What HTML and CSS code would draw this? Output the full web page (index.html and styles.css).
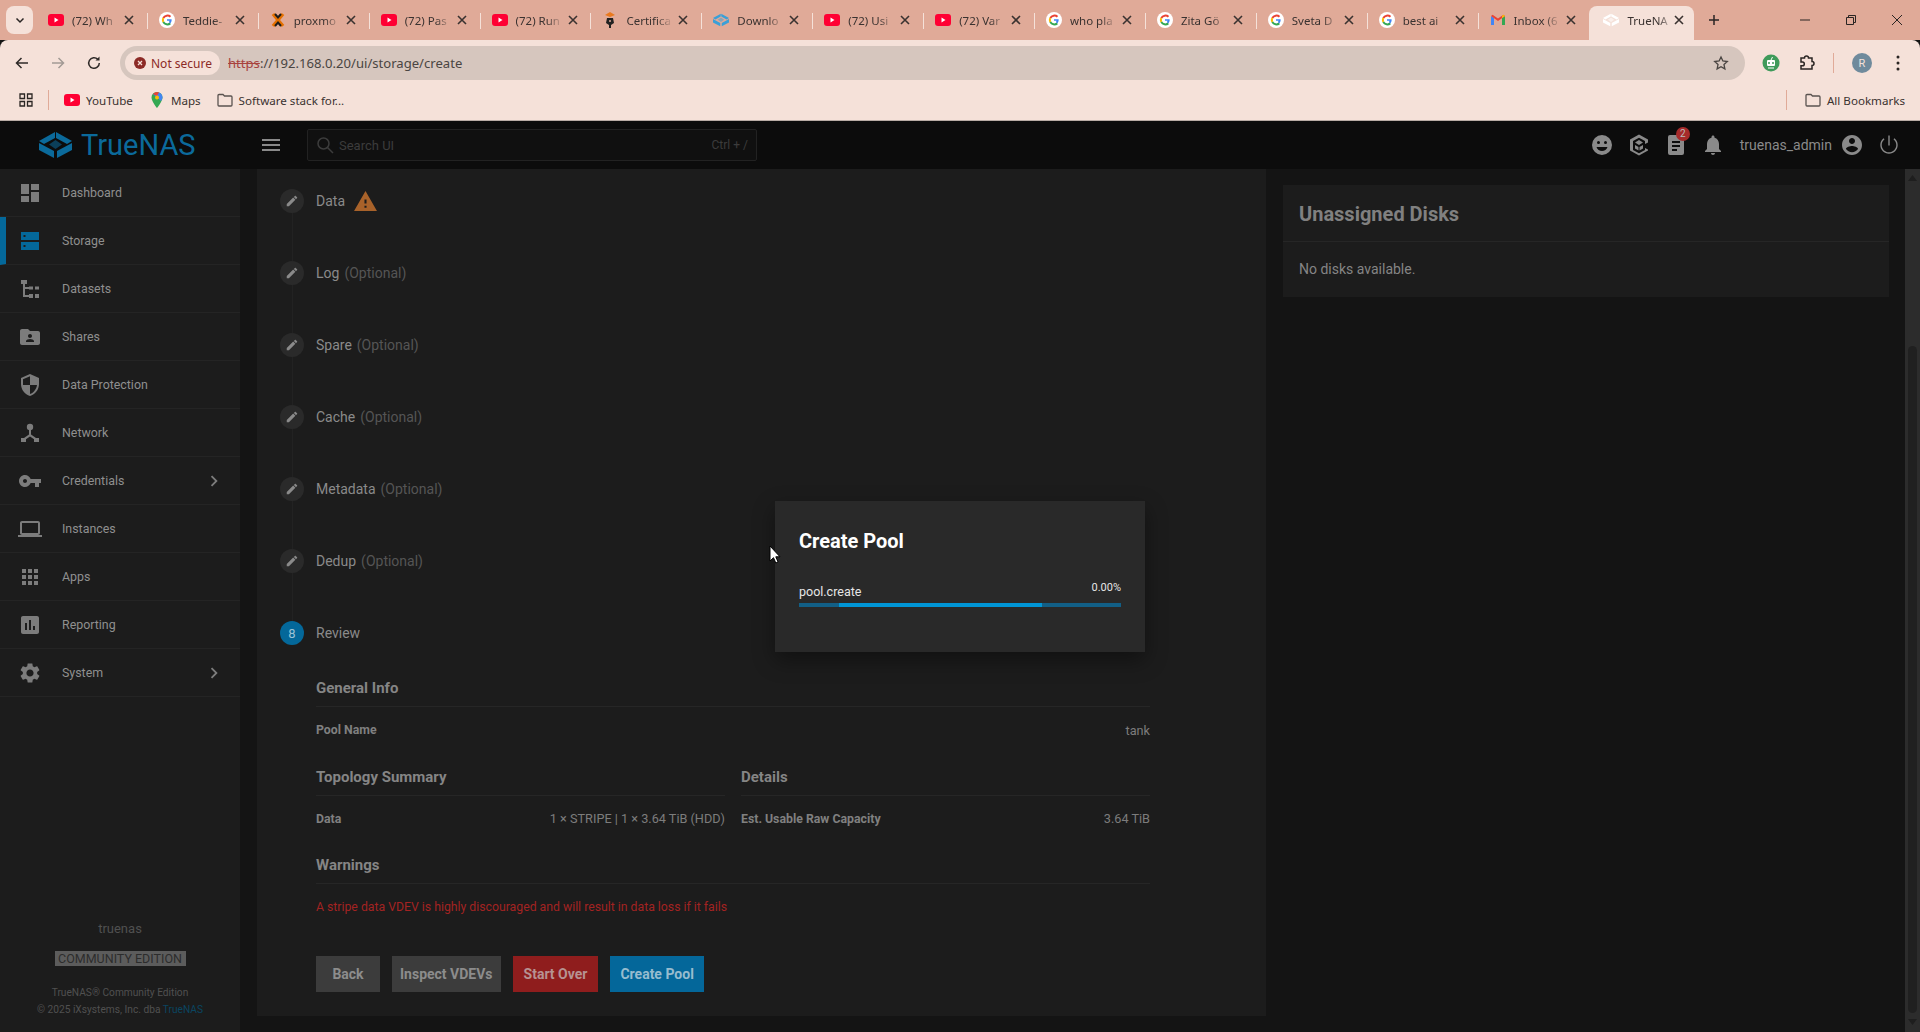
FILE: index.html
```html
<!DOCTYPE html>
<html lang="en">
<head>
  <meta charset="UTF-8">
  <title>TrueNAS - Storage</title>
  <link rel="stylesheet" href="styles.css">
</head>
<body>
  <svg class="defs" width="0" height="0">
    <symbol id="i-yt" viewBox="0 0 16 16"><rect y="2" width="16" height="12" rx="3" fill="#ff0033"/><path d="M6.5 5.5v5l4-2.5z" fill="#fff"/></symbol>
    <symbol id="i-g" viewBox="0 0 16 16"><circle cx="8" cy="8" r="8" fill="#fff"/><path d="M11.5 4.8A4.7 4.7 0 0 0 4.3 6" fill="none" stroke="#ea4335" stroke-width="2"/><path d="M4.3 6a4.7 4.7 0 0 0 0 4" fill="none" stroke="#fbbc05" stroke-width="2"/><path d="M4.3 10a4.7 4.7 0 0 0 7 1.4" fill="none" stroke="#34a853" stroke-width="2"/><path d="M8 7.2h4.6c.2 1.7-.3 3.2-1.3 4.2L9.8 10c.5-.4.7-.8.8-1.2H8z" fill="#4285f4"/></symbol>
    <symbol id="i-x" viewBox="0 0 16 16"><path d="M3 2l10 12M13 2L3 14" stroke="#e57000" stroke-width="3.4" fill="none"/><path d="M5 2l3 3.4L11 2M5 14l3-3.4 3 3.4" stroke="#1c1c1c" stroke-width="2" fill="none"/></symbol>
    <symbol id="i-cert" viewBox="0 0 16 16"><path d="M8 0l5 3-5 2-5-2z" fill="#e8791f"/><path d="M5 6h6l1 5-3 2v3H7v-3l-3-2z" fill="#222"/><circle cx="8" cy="9" r="1" fill="#e0aa98"/></symbol>
    <symbol id="i-tn" viewBox="0 0 33 26"><path d="M16 0L0 9l5 3 11-6z" fill="currentColor"/><path d="M17 0l16 9-5 3-11-6z" fill="currentColor"/><path d="M0 11v7l15 8v-7z" fill="currentColor"/><path d="M33 11v7l-15 8v-7z" fill="currentColor"/><path d="M16.5 8l6.5 4.5-6.5 4.5-6.5-4.5z" fill="currentColor" opacity=".55"/></symbol>
    <symbol id="i-gm" viewBox="0 0 16 16"><path d="M1 13V4l3 2v7z" fill="#4285f4"/><path d="M15 13V4l-3 2v7z" fill="#34a853"/><path d="M1 4l7 5 7-5-1.6-1.2L8 6.6 2.6 2.8z" fill="#ea4335"/><path d="M12 6l3-2-1.6-1.2-1.4 1z" fill="#fbbc05"/></symbol>
    <symbol id="i-close" viewBox="0 0 10 10"><path d="M1 1l8 8M9 1L1 9" stroke="#3a3230" stroke-width="1.6" fill="none"/></symbol>
    <symbol id="i-folder" viewBox="0 0 16 14"><path d="M1 2.5A1 1 0 0 1 2 1.500h4l1.500 1.500H14a1 1 0 0 1 1 1V12a1 1 0 0 1-1 1H2a1 1 0 0 1-1-1z" fill="none" stroke="#5a5350" stroke-width="1.300"/></symbol>
    <symbol id="i-pencil" viewBox="0 0 24 24"><path d="M3 17.250V21h3.750L17.810 9.940l-3.750-3.750L3 17.250zM20.710 7.040c.39-.39.39-1.020 0-1.410l-2.340-2.340c-.39-.39-1.020-.39-1.410 0l-1.830 1.830 3.750 3.750 1.830-1.830z" fill="currentColor"/></symbol>
    <symbol id="i-chev" viewBox="0 0 24 24"><path d="M8.590 16.590L13.170 12 8.590 7.410 10 6l6 6-6 6z" fill="currentColor"/></symbol>
  </svg>

  <div class="tabstrip">
    <button class="tab-menu"><svg width="12" height="12" viewBox="0 0 12 12"><path d="M2.500 4.500L6 8l3.500-3.500" stroke="#2a2523" stroke-width="1.500" fill="none"/></svg></button>
    <div class="tab"><svg class="fav"><use href="#i-yt"/></svg><span class="tab-title">(72) Wh</span><svg class="tab-x"><use href="#i-close"/></svg></div>
    <div class="tab"><svg class="fav"><use href="#i-g"/></svg><span class="tab-title">Teddie-</span><svg class="tab-x"><use href="#i-close"/></svg></div>
    <div class="tab"><svg class="fav"><use href="#i-x"/></svg><span class="tab-title">proxmo</span><svg class="tab-x"><use href="#i-close"/></svg></div>
    <div class="tab"><svg class="fav"><use href="#i-yt"/></svg><span class="tab-title">(72) Pas</span><svg class="tab-x"><use href="#i-close"/></svg></div>
    <div class="tab"><svg class="fav"><use href="#i-yt"/></svg><span class="tab-title">(72) Run</span><svg class="tab-x"><use href="#i-close"/></svg></div>
    <div class="tab"><svg class="fav"><use href="#i-cert"/></svg><span class="tab-title">Certifica</span><svg class="tab-x"><use href="#i-close"/></svg></div>
    <div class="tab"><svg class="fav fav-blue"><use href="#i-tn"/></svg><span class="tab-title">Downlo</span><svg class="tab-x"><use href="#i-close"/></svg></div>
    <div class="tab"><svg class="fav"><use href="#i-yt"/></svg><span class="tab-title">(72) Usi</span><svg class="tab-x"><use href="#i-close"/></svg></div>
    <div class="tab"><svg class="fav"><use href="#i-yt"/></svg><span class="tab-title">(72) Var</span><svg class="tab-x"><use href="#i-close"/></svg></div>
    <div class="tab"><svg class="fav"><use href="#i-g"/></svg><span class="tab-title">who pla</span><svg class="tab-x"><use href="#i-close"/></svg></div>
    <div class="tab"><svg class="fav"><use href="#i-g"/></svg><span class="tab-title">Zita Gö</span><svg class="tab-x"><use href="#i-close"/></svg></div>
    <div class="tab"><svg class="fav"><use href="#i-g"/></svg><span class="tab-title">Sveta D</span><svg class="tab-x"><use href="#i-close"/></svg></div>
    <div class="tab"><svg class="fav"><use href="#i-g"/></svg><span class="tab-title">best ai</span><svg class="tab-x"><use href="#i-close"/></svg></div>
    <div class="tab tab-last"><svg class="fav"><use href="#i-gm"/></svg><span class="tab-title">Inbox (6</span><svg class="tab-x"><use href="#i-close"/></svg></div>
    <div class="tab tab-active"><svg class="fav fav-white"><use href="#i-tn"/></svg><span class="tab-title">TrueNA</span><svg class="tab-x"><use href="#i-close"/></svg></div>
    <svg class="tab-new" width="12" height="12" viewBox="0 0 12 12"><path d="M6 1v10M1 6h10" stroke="#2a2523" stroke-width="1.500"/></svg>
    <div class="win-controls">
      <svg width="12" height="12" viewBox="0 0 12 12"><path d="M1 6h10" stroke="#2a2523"/></svg>
      <svg width="12" height="12" viewBox="0 0 12 12"><path d="M3.500 3.500V1.500h7v7h-2M1.500 3.500h7v7h-7z" fill="none" stroke="#2a2523"/></svg>
      <svg width="12" height="12" viewBox="0 0 12 12"><path d="M1 1l10 10M11 1L1 11" stroke="#2a2523"/></svg>
    </div>
  </div>

  <div class="toolbar">
    <span class="nav-btn"><svg width="16" height="16" viewBox="0 0 16 16"><path d="M14 8H3M7.500 3L2.500 8l5 5" fill="none" stroke="#2f2a28" stroke-width="1.500"/></svg></span>
    <span class="nav-btn"><svg width="16" height="16" viewBox="0 0 16 16"><path d="M2 8h11M8.500 3l5 5-5 5" fill="none" stroke="#a39a95" stroke-width="1.500"/></svg></span>
    <span class="nav-btn"><svg width="16" height="16" viewBox="0 0 16 16"><path d="M13.300 8a5.300 5.300 0 1 1-1.500-3.700" fill="none" stroke="#2f2a28" stroke-width="1.500"/><path d="M13.500 1.500v4h-4z" fill="#2f2a28"/></svg></span>
    <div class="omnibox">
      <span class="chip">
        <svg width="12" height="12" viewBox="0 0 12 12"><circle cx="6" cy="6" r="6" fill="#8c2a26"/><path d="M4 4l4 4M8 4L4 8" stroke="#f5e1d9" stroke-width="1.300"/></svg>
        Not secure
      </span>
      <span class="url"><span class="url-scheme">https</span>://192.168.0.20/ui/storage/create</span>
      <svg class="star" width="16" height="16" viewBox="0 0 24 24"><path d="M12 3l2.800 6 6.600.8-4.900 4.500 1.300 6.500-5.800-3.200-5.800 3.200 1.300-6.500L2.600 9.800 9.200 9z" fill="none" stroke="#4a4542" stroke-width="2"/></svg>
    </div>
    <div class="toolbar-right">
      <span class="nav-btn"><svg width="18" height="18" viewBox="0 0 18 18"><circle cx="9" cy="9" r="8.500" fill="#3f9a5a"/><rect x="5" y="6" width="8" height="6" rx="1" fill="#fff"/><circle cx="7" cy="9" r="1" fill="#3f9a5a"/><circle cx="11" cy="9" r="1" fill="#3f9a5a"/><path d="M9 6l1.500-3M6 14h6" stroke="#fff"/></svg></span>
      <span class="nav-btn"><svg width="18" height="18" viewBox="0 0 18 18"><path d="M3 4h3.500a2 2 0 0 1 4 0H14v3.500a2 2 0 0 1 0 4V15H3v-3.300h1.500a1.800 1.800 0 0 0 0-3.600H3z" fill="none" stroke="#2a2523" stroke-width="1.500"/></svg></span>
      <span class="toolbar-sep"></span>
      <span class="nav-btn"><span class="avatar">R</span></span>
      <span class="nav-btn"><svg width="4" height="16" viewBox="0 0 4 16"><circle cx="2" cy="2" r="1.500" fill="#2a2523"/><circle cx="2" cy="8" r="1.500" fill="#2a2523"/><circle cx="2" cy="14" r="1.500" fill="#2a2523"/></svg></span>
    </div>
  </div>

  <div class="bookmarks">
    <svg class="bm-apps" width="14" height="14" viewBox="0 0 14 14"><path d="M1 1h4.500v4.500H1zM8.500 1H13v4.500H8.500zM1 8.500h4.500V13H1zM8.500 8.500H13V13H8.500z" fill="none" stroke="#2a2523" stroke-width="1.300"/></svg>
    <span class="bm-sep"></span>
    <span class="bm"><svg class="fav"><use href="#i-yt"/></svg>YouTube</span>
    <span class="bm"><svg class="fav" viewBox="0 0 16 16"><path d="M8 0a5.500 5.500 0 0 0-5.500 5.500C2.500 9.500 8 16 8 16s5.500-6.500 5.500-10.500A5.500 5.500 0 0 0 8 0z" fill="#34a853"/><path d="M4 2l8 7c.8-1.200 1.500-2.400 1.500-3.500A5.500 5.500 0 0 0 10 .4z" fill="#4285f4"/><path d="M4 2a5.500 5.500 0 0 1 6-1.600L8 4z" fill="#ea4335"/><circle cx="8" cy="5.500" r="2" fill="#fbbc05"/></svg>Maps</span>
    <span class="bm"><svg class="fav" viewBox="0 0 16 14"><use href="#i-folder"/></svg>Software stack for...</span>
    <span class="bm-sep bm-sep-right"></span>
    <span class="bm bm-all"><svg class="fav" viewBox="0 0 16 14"><use href="#i-folder"/></svg>All Bookmarks</span>
  </div>

  <header class="topbar">
    <div class="brand">
      <svg class="brand-mark" width="33" height="26"><use href="#i-tn"/></svg>
      <span class="brand-name">TrueNAS</span>
    </div>
    <svg class="hamburger" width="24" height="24" viewBox="0 0 24 24"><path d="M3 18h18v-2H3v2zm0-5h18v-2H3v2zm0-7v2h18V6H3z" fill="#8a8a8a"/></svg>
    <div class="search">
      <svg width="18" height="18" viewBox="0 0 18 18"><circle cx="7.500" cy="7.500" r="5.500" fill="none" stroke="#3c3c3c" stroke-width="1.500"/><path d="M11.500 11.500L17 17" stroke="#3c3c3c" stroke-width="1.500"/></svg>
      <span class="search-text">Search UI</span>
      <span class="search-key">Ctrl + /</span>
    </div>
    <div class="top-actions">
      <svg width="24" height="24" viewBox="0 0 24 24"><path fill-rule="evenodd" d="M12 2a10 10 0 1 0 0 20 10 10 0 0 0 0-20zM8.500 8a1.500 1.500 0 1 1 0 3 1.500 1.500 0 0 1 0-3zm7 0a1.500 1.500 0 1 1 0 3 1.500 1.500 0 0 1 0-3zM12 18c-2.600 0-4.700-1.600-5.500-4h11c-.8 2.400-2.900 4-5.500 4z" fill="#8a8a8a"/></svg>
      <svg width="24" height="24" viewBox="0 0 24 24"><path d="M12 1.500l9 5v3l-3 1.500v-3l-6-3.300-6 3.300v9l6 3.300 6-3.300V15l3 1.500v1L12 22.500 3 17.500v-11z" fill="#8a8a8a"/><path d="M12 7l4 2.500-4 2.500-4-2.500zM8 12l3.500 2v3.500L8 15.500zM16 12l-3.500 2v3.500l3.500-2z" fill="#8a8a8a"/></svg>
      <span class="task-icon">
        <svg width="24" height="24" viewBox="0 0 24 24"><path fill-rule="evenodd" d="M6 2h12a2 2 0 0 1 2 2v16a2 2 0 0 1-2 2H6a2 2 0 0 1-2-2V4a2 2 0 0 1 2-2zm2 6v2h8V8zm0 4v2h8v-2zm0 4v2h5v-2z" fill="#8a8a8a"/></svg>
        <span class="badge">2</span>
      </span>
      <svg width="24" height="24" viewBox="0 0 24 24"><path d="M12 22c1.100 0 2-.9 2-2h-4c0 1.100.89 2 2 2zm6-6v-5c0-3.070-1.640-5.640-4.500-6.320V4c0-.83-.67-1.500-1.500-1.500s-1.500.67-1.500 1.500v.68C7.630 5.360 6 7.920 6 11v5l-2 2v1h16v-1l-2-2z" fill="#8a8a8a"/></svg>
      <span class="username">truenas_admin</span>
      <svg width="24" height="24" viewBox="0 0 24 24"><path d="M12 2C6.480 2 2 6.480 2 12s4.480 10 10 10 10-4.480 10-10S17.520 2 12 2zm0 3c1.660 0 3 1.340 3 3s-1.340 3-3 3-3-1.340-3-3 1.340-3 3-3zm0 14.200c-2.500 0-4.710-1.280-6-3.220.03-1.990 4-3.080 6-3.080 1.990 0 5.970 1.090 6 3.080-1.290 1.940-3.500 3.220-6 3.220z" fill="#8a8a8a"/></svg>
      <svg width="24" height="24" viewBox="0 0 24 24"><path d="M12.700 2.500h-1.400v10h1.400zM17.500 5.300l-1 1C18.200 7.700 19.300 9.700 19.300 12c0 4-3.300 7.300-7.300 7.300S4.700 16 4.700 12c0-2.300 1.100-4.300 2.800-5.700l-1-1C4.400 7 3.300 9.400 3.300 12c0 4.800 3.900 8.700 8.700 8.700s8.700-3.900 8.700-8.700c0-2.600-1.100-5-3.200-6.700z" fill="#8a8a8a"/></svg>
    </div>
  </header>

  <div class="app">
    <nav class="sidebar">
      <a class="nav-item"><svg class="nav-icon" viewBox="0 0 24 24"><path d="M3 13h8V3H3v10zm0 8h8v-6H3v6zm10 0h8V11h-8v10zm0-18v6h8V3h-8z"/></svg>Dashboard</a>
      <a class="nav-item nav-active"><svg class="nav-icon" viewBox="0 0 24 24"><path fill-rule="evenodd" d="M3 3h18v8H3zm0 10h18v8H3zM5.500 6v2h2V6zm0 10v2h2v-2z"/></svg>Storage</a>
      <a class="nav-item"><svg class="nav-icon" viewBox="0 0 24 24"><path d="M3 3h6v4H3zM11 9.500h4v3h-4zM17 9.500h4v3h-4zM11 17h4v4h-4zM17 17h4v4h-4zM5 7h2v3h4v2H7v6h4v2H5z"/></svg>Datasets</a>
      <a class="nav-item"><svg class="nav-icon" viewBox="0 0 24 24"><path d="M20 6h-8l-2-2H4c-1.100 0-1.990.9-1.990 2L2 18c0 1.100.9 2 2 2h16c1.100 0 2-.9 2-2V8c0-1.100-.9-2-2-2zm-8 3c1.100 0 2 .9 2 2s-.9 2-2 2-2-.9-2-2 .9-2 2-2zm4 8H8v-1c0-1.330 2.670-2 4-2s4 .67 4 2v1z"/></svg>Shares</a>
      <a class="nav-item"><svg class="nav-icon" viewBox="0 0 24 24"><path d="M12 1L3 5v6c0 5.550 3.840 10.740 9 12 5.160-1.260 9-6.450 9-12V5l-9-4zm0 10.990h7c-.53 4.120-3.280 7.790-7 8.940V12H5V6.300l7-3.110v8.800z"/></svg>Data Protection</a>
      <a class="nav-item"><svg class="nav-icon" viewBox="0 0 24 24"><circle cx="12" cy="6" r="3.200"/><path d="M11 8h2v5.500l5 3.500-1.200 1.700-4.800-3.300-4.800 3.300L6 17l5-3.500z"/><path d="M3 17h5v4H3zM16 17h5v4h-5z"/></svg>Network</a>
      <a class="nav-item"><svg class="nav-icon" viewBox="0 0 24 24"><path d="M12.650 10C11.830 7.670 9.610 6 7 6c-3.310 0-6 2.690-6 6s2.690 6 6 6c2.610 0 4.830-1.670 5.650-4H17v4h4v-4h2v-4H12.650zM7 14c-1.100 0-2-.9-2-2s.9-2 2-2 2 .9 2 2-.9 2-2 2z"/></svg>Credentials<svg class="nav-chev"><use href="#i-chev"/></svg></a>
      <a class="nav-item"><svg class="nav-icon" viewBox="0 0 24 24"><path d="M20 18c1.100 0 1.990-.9 1.990-2L22 6c0-1.100-.9-2-2-2H4c-1.100 0-2 .9-2 2v10c0 1.100.9 2 2 2H0v2h24v-2h-4zM4 6h16v10H4V6z"/></svg>Instances</a>
      <a class="nav-item"><svg class="nav-icon" viewBox="0 0 24 24"><path d="M4 8h4V4H4v4zm6 12h4v-4h-4v4zm-6 0h4v-4H4v4zm0-6h4v-4H4v4zm6 0h4v-4h-4v4zm6-10v4h4V4h-4zm-6 4h4V4h-4v4zm6 6h4v-4h-4v4zm0 6h4v-4h-4v4z"/></svg>Apps</a>
      <a class="nav-item"><svg class="nav-icon" viewBox="0 0 24 24"><path d="M19 3H5c-1.100 0-2 .9-2 2v14c0 1.100.9 2 2 2h14c1.100 0 2-.9 2-2V5c0-1.100-.9-2-2-2zM9 17H7v-7h2v7zm4 0h-2V7h2v10zm4 0h-2v-4h2v4z"/></svg>Reporting</a>
      <a class="nav-item"><svg class="nav-icon" viewBox="0 0 24 24"><path d="M19.140 12.940c.04-.3.06-.61.06-.94 0-.32-.02-.64-.07-.94l2.030-1.580c.18-.14.23-.41.12-.61l-1.920-3.320c-.12-.22-.37-.29-.59-.22l-2.390.96c-.5-.38-1.030-.7-1.620-.94l-.36-2.540c-.04-.24-.24-.41-.48-.41h-3.840c-.24 0-.43.17-.47.41l-.36 2.540c-.59.24-1.130.57-1.620.94l-2.390-.96c-.22-.08-.47 0-.59.22L2.740 8.870c-.12.21-.08.47.12.61l2.030 1.580c-.05.3-.09.63-.09.94s.02.64.07.94l-2.030 1.580c-.18.14-.23.41-.12.61l1.920 3.320c.12.22.37.29.59.22l2.390-.96c.5.38 1.030.7 1.620.94l.36 2.540c.05.24.24.41.48.41h3.840c.24 0 .44-.17.47-.41l.36-2.540c.59-.24 1.130-.56 1.620-.94l2.390.96c.22.08.47 0 .59-.22l1.920-3.320c.12-.22.07-.47-.12-.61l-2.010-1.580zM12 15.600c-1.980 0-3.600-1.620-3.600-3.600s1.620-3.600 3.600-3.600 3.600 1.620 3.600 3.600-1.620 3.600-3.600 3.600z"/></svg>System<svg class="nav-chev"><use href="#i-chev"/></svg></a>
      <div class="side-footer">
        <div class="host">truenas</div>
        <div class="edition">COMMUNITY EDITION</div>
        <div class="copy">TrueNAS® Community Edition</div>
        <div class="copy">© 2025 iXsystems, Inc. dba <span class="copy-link">TrueNAS</span></div>
      </div>
    </nav>

    <main class="content">
      <section class="wizard">
        <div class="step"><span class="step-dot"><svg width="14" height="14"><use href="#i-pencil"/></svg></span><span class="step-label">Data</span><svg class="step-warn" width="25" height="25" viewBox="0 0 24 24"><path d="M1 21h22L12 2 1 21zm12-3h-2v-2h2v2zm0-4h-2v-4h2v4z" fill="#a8622a"/></svg></div>
        <div class="step-line"></div>
        <div class="step"><span class="step-dot"><svg width="14" height="14"><use href="#i-pencil"/></svg></span><span class="step-label">Log</span><span class="step-opt">(Optional)</span></div>
        <div class="step-line"></div>
        <div class="step"><span class="step-dot"><svg width="14" height="14"><use href="#i-pencil"/></svg></span><span class="step-label">Spare</span><span class="step-opt">(Optional)</span></div>
        <div class="step-line"></div>
        <div class="step"><span class="step-dot"><svg width="14" height="14"><use href="#i-pencil"/></svg></span><span class="step-label">Cache</span><span class="step-opt">(Optional)</span></div>
        <div class="step-line"></div>
        <div class="step"><span class="step-dot"><svg width="14" height="14"><use href="#i-pencil"/></svg></span><span class="step-label">Metadata</span><span class="step-opt">(Optional)</span></div>
        <div class="step-line"></div>
        <div class="step"><span class="step-dot"><svg width="14" height="14"><use href="#i-pencil"/></svg></span><span class="step-label">Dedup</span><span class="step-opt">(Optional)</span></div>
        <div class="step-line"></div>
        <div class="step"><span class="step-dot step-dot-on">8</span><span class="step-label">Review</span></div>

        <div class="review">
          <div class="review-block">
            <h3 class="review-head">General Info</h3>
            <div class="review-row"><span class="review-key">Pool Name</span><span>tank</span></div>
          </div>
          <div class="review-cols">
            <div class="review-block">
              <h3 class="review-head">Topology Summary</h3>
              <div class="review-row"><span class="review-key">Data</span><span>1 × STRIPE | 1 × 3.64 TiB (HDD)</span></div>
            </div>
            <div class="review-block">
              <h3 class="review-head">Details</h3>
              <div class="review-row"><span class="review-key">Est. Usable Raw Capacity</span><span>3.64 TiB</span></div>
            </div>
          </div>
          <div class="review-block">
            <h3 class="review-head">Warnings</h3>
            <div class="review-warn">A stripe data VDEV is highly discouraged and will result in data loss if it fails</div>
          </div>
          <div class="actions">
            <button class="btn btn-back">Back</button>
            <button class="btn">Inspect VDEVs</button>
            <button class="btn btn-red">Start Over</button>
            <button class="btn btn-blue">Create Pool</button>
          </div>
        </div>
      </section>

      <aside class="disks">
        <h2 class="disks-head">Unassigned Disks</h2>
        <div class="disks-body">No disks available.</div>
      </aside>
    </main>

    <div class="scrollbar"><svg width="9" height="6" viewBox="0 0 9 6"><path d="M4.500 0L9 6H0z" fill="#1e1e1e"/></svg><div class="scroll-thumb"></div><svg width="9" height="6" viewBox="0 0 9 6"><path d="M4.500 6L9 0H0z" fill="#1e1e1e"/></svg></div>
  </div>

  <div class="dialog">
    <h2 class="dialog-title">Create Pool</h2>
    <div class="dialog-row"><span class="dialog-job">pool.create</span><span class="dialog-pct">0.00%</span></div>
    <div class="progress"><div class="progress-fill"></div></div>
  </div>

  <svg class="cursor" width="12" height="19" viewBox="0 0 12 19"><path d="M1 1v15l3.500-3.300 2.300 5.300 2.300-1-2.300-5.200H11z" fill="#fff" stroke="#000"/></svg>
</body>
</html>
```

FILE: styles.css
```css
/* Page */
* {
  box-sizing: border-box;
}
html, body {
  margin: 0;
  height: 1032px;
  overflow: hidden;
}
body {
  position: relative;
  background: #141414;
  font-family: Roboto, "Liberation Sans", sans-serif;
  color: #8a8a8a;
}
.defs {
  position: absolute;
}
h2, h3 {
  margin: 0;
}

/* Browser tabs */
.tabstrip {
  display: flex;
  align-items: center;
  height: 40px;
  padding-left: 6px;
  background: #e0aa98;
  font-family: "Noto Sans", sans-serif;
  font-size: 11.5px;
  color: #3a3230;
}
.tab-menu {
  display: flex;
  align-items: center;
  justify-content: center;
  width: 27px;
  height: 28px;
  margin-right: 4px;
  padding: 0;
  border: none;
  border-radius: 8px;
  background: #f5e1d9;
}
.tab {
  display: flex;
  align-items: center;
  flex: none;
  position: relative;
  width: 110.9px;
  height: 40px;
  padding-left: 11px;
}
.tab::after {
  content: "";
  position: absolute;
  right: 0;
  top: 13px;
  width: 1px;
  height: 16px;
  background: #f5e1d9;
}
.tab-last::after, .tab-active::after {
  display: none;
}
.tab-active {
  width: 105px;
  height: 34px;
  margin-top: 6px;
  padding-bottom: 6px;
  padding-left: 14px;
  border-radius: 8px 8px 0 0;
  background: #f5e1d9;
}
.fav {
  flex: none;
  width: 16px;
  height: 16px;
}
.fav-blue {
  color: #3aa0d8;
}
.fav-white {
  color: #fff;
}
.tab-title {
  flex: none;
  width: 47px;
  margin-left: 8px;
  overflow: hidden;
  white-space: nowrap;
  -webkit-mask-image: linear-gradient(to right, #000 65%, transparent);
  mask-image: linear-gradient(to right, #000 65%, transparent);
}
.tab-x {
  flex: none;
  width: 10px;
  height: 10px;
  margin-left: 5px;
}
.tab-active .tab-x {
  margin-left: 0;
}
.tab-new {
  margin-left: 14px;
}
.win-controls {
  display: flex;
  gap: 34px;
  margin-left: auto;
  padding-right: 17px;
}

/* Address bar */
.toolbar {
  display: flex;
  align-items: center;
  height: 45px;
  padding: 6px 4px 5px;
  background: #f5e1d9;
  border-radius: 8px 8px 0 0;
}
.nav-btn {
  display: flex;
  align-items: center;
  justify-content: center;
  flex: none;
  width: 36px;
  height: 34px;
}
.omnibox {
  display: flex;
  align-items: center;
  flex: 1;
  height: 34px;
  margin-left: 8px;
  padding: 0 16px 0 5px;
  border-radius: 17px;
  background: #d6c6be;
}
.chip {
  display: flex;
  align-items: center;
  gap: 5px;
  width: 95px;
  height: 24px;
  padding-left: 9px;
  border-radius: 12px;
  background: #f5e1d9;
  font-family: "Noto Sans", sans-serif;
  font-size: 12px;
  color: #8c2a26;
}
.url {
  margin-left: 8px;
  font-family: "Noto Sans", sans-serif;
  font-size: 13.1px;
  color: #4a4542;
}
.url-scheme {
  color: #a8433e;
  text-decoration: line-through;
}
.star {
  margin-left: auto;
}
.toolbar-right {
  display: flex;
  align-items: center;
  margin-left: 8px;
}
.toolbar-sep {
  width: 1px;
  height: 20px;
  margin: 0 10px 0 8px;
  background: #e0aa98;
}
.avatar {
  display: flex;
  align-items: center;
  justify-content: center;
  width: 20px;
  height: 20px;
  border-radius: 50%;
  background: #6f8a9c;
  color: #f5e1d9;
  font-size: 11px;
}

/* Bookmarks bar */
.bookmarks {
  display: flex;
  align-items: center;
  height: 36px;
  padding: 0 0 5px 19px;
  background: #f5e1d9;
  border-bottom: 1px solid #b9aca5;
  font-family: "Noto Sans", sans-serif;
  font-size: 11.6px;
  color: #3a3230;
}
.bm-sep {
  width: 1px;
  height: 20px;
  margin: 0 15px;
  background: #e0aa98;
}
.bm-sep-right {
  margin: 0 18px 0 auto;
}
.bm {
  display: flex;
  align-items: center;
  gap: 6px;
  margin-right: 16px;
}
.bm-all {
  margin-right: 15px;
}

/* TrueNAS top bar */
.topbar {
  display: flex;
  align-items: center;
  height: 48px;
  padding-left: 39px;
  background: #0c0c0c;
}
.brand {
  display: flex;
  align-items: center;
  width: 220px;
}
.brand-mark {
  color: #0b6a9b;
}
.brand-name {
  margin-left: 9px;
  font-size: 29px;
  line-height: 1;
  color: #0b6a9b;
}
.search {
  display: flex;
  align-items: center;
  width: 450px;
  height: 32px;
  margin-left: 24px;
  padding: 0 8px 0 8px;
  border: 1px solid #222;
  border-radius: 2px;
  background: #101010;
  font-size: 13px;
  color: #3c3c3c;
}
.search-text {
  margin-left: 5px;
}
.search-key {
  margin-left: auto;
  font-size: 12px;
}
.top-actions {
  display: flex;
  align-items: center;
  gap: 13px;
  margin-left: auto;
  padding-right: 19px;
}
.task-icon {
  position: relative;
  height: 24px;
}
.badge {
  position: absolute;
  top: -6px;
  left: 12px;
  width: 14px;
  height: 14px;
  border-radius: 50%;
  background: #a62a2a;
  color: #bbb;
  font-size: 10px;
  line-height: 14px;
  text-align: center;
}
.username {
  margin: 0 -5px 0 2px;
  font-size: 14px;
  color: #8a8a8a;
}

/* App body */
.app {
  display: flex;
  height: 863px;
}
.sidebar {
  display: flex;
  flex-direction: column;
  flex: none;
  width: 240px;
  background: #1c1c1c;
}
.nav-item {
  display: flex;
  align-items: center;
  flex: none;
  height: 48px;
  padding-left: 18px;
  border-bottom: 1px solid #242424;
  font-size: 12.4px;
  color: #8f8f8f;
}
.nav-active {
  padding-left: 12px;
  border-left: 6px solid #04689a;
}
.nav-icon {
  width: 24px;
  height: 24px;
  margin-right: 20px;
  fill: #7c7c7c;
}
.nav-active .nav-icon {
  fill: #04689a;
}
.nav-chev {
  width: 22px;
  height: 22px;
  margin-left: auto;
  margin-right: 15px;
  color: #7c7c7c;
}
.side-footer {
  display: flex;
  flex-direction: column;
  align-items: center;
  margin-top: auto;
  padding-bottom: 14px;
  font-size: 10.2px;
  color: #505050;
}
.host {
  margin-bottom: 14px;
  font-size: 13px;
  line-height: 16px;
}
.edition {
  width: 131px;
  height: 15px;
  margin-bottom: 18px;
  background: #5c5c5c;
  color: #2c2c2c;
  font-size: 12.5px;
  line-height: 15px;
  text-align: center;
}
.copy {
  line-height: 17px;
}
.copy-link {
  color: #0a4560;
}

/* Main column */
.content {
  display: flex;
  align-items: flex-start;
  flex: 1;
  gap: 17px;
  height: 863px;
  padding: 0 16px 16px 17px;
}
.wizard {
  flex: none;
  width: 1009px;
  height: 847px;
  padding: 20px 116px 0 23px;
  background: #1c1c1c;
}
.step {
  display: flex;
  align-items: center;
  height: 24px;
  font-size: 14px;
}
.step-line {
  width: 1px;
  height: 48px;
  margin-left: 12px;
  background: #222;
}
.step-dot {
  display: flex;
  align-items: center;
  justify-content: center;
  flex: none;
  width: 24px;
  height: 24px;
  margin-right: 12px;
  border-radius: 50%;
  background: #2a2a2a;
  color: #8a8a8a;
}
.step-dot-on {
  background: #04689a;
  color: #9cc3d6;
  font-size: 13px;
}
.step-label {
  color: #8a8a8a;
}
.step-opt {
  margin-left: 5px;
  color: #555;
}
.step-warn {
  margin-left: 8px;
}
.review {
  margin: 31px 0 0 36px;
}
.review-block {
  height: 88.5px;
}
.review-cols {
  display: grid;
  grid-template-columns: 1fr 1fr;
  gap: 16px;
}
.review-head {
  height: 31px;
  padding-top: 2px;
  border-bottom: 1px solid #262626;
  font-size: 15px;
  font-weight: 700;
  line-height: 20px;
  color: #858585;
}
.review-row {
  display: flex;
  justify-content: space-between;
  align-items: center;
  height: 46px;
  font-size: 12.7px;
  color: #7c7c7c;
}
.review-key {
  font-size: 12.3px;
  font-weight: 700;
  color: #808080;
}
.review-warn {
  height: 46px;
  font-size: 12.25px;
  line-height: 46px;
  color: #a32322;
}
.actions {
  display: flex;
  gap: 12px;
  margin-top: 14px;
}
.btn {
  height: 36px;
  padding: 0 8px;
  border: none;
  background: #3c3c3c;
  font-family: inherit;
  font-size: 14px;
  font-weight: 700;
  color: #8c8c8c;
}
.btn-back {
  width: 64px;
}
.btn-red {
  padding: 0 11px;
  background: #8f1d1d;
  color: #b69292;
}
.btn-blue {
  padding: 0 10px;
  background: #04679a;
  color: #97bccf;
}

/* Unassigned disks card */
.disks {
  flex: none;
  width: 606px;
  height: 112px;
  margin-top: 16px;
  background: #1c1c1c;
}
.disks-head {
  height: 57px;
  padding: 1px 16px 0;
  border-bottom: 1px solid #262626;
  font-size: 20px;
  font-weight: 700;
  line-height: 56px;
  color: #808080;
}
.disks-body {
  padding: 0 16px;
  font-size: 14px;
  line-height: 55px;
  color: #858585;
}
.scrollbar {
  display: flex;
  flex-direction: column;
  align-items: center;
  justify-content: space-between;
  flex: none;
  width: 15px;
  padding: 6px 0 7px;
  background: #2c2c2c;
}
.scroll-thumb {
  align-self: stretch;
  height: 667px;
  margin: auto 3px 6px;
  border-radius: 5px;
  background: #202020;
}

/* Job dialog, over the page */
.dialog {
  position: absolute;
  left: 775px;
  top: 501px;
  width: 370px;
  height: 151px;
  padding: 24px;
  background: #292929;
  box-shadow: 0 8px 20px rgba(0, 0, 0, .4);
}
.dialog-title {
  font-size: 20px;
  font-weight: 700;
  line-height: 32px;
  color: #fff;
}
.dialog-row {
  display: flex;
  justify-content: space-between;
  margin-top: 25px;
  height: 21px;
  font-size: 12.5px;
  line-height: 20px;
  color: #e6e6e6;
}
.dialog-pct {
  font-size: 11px;
  line-height: 12px;
}
.progress {
  height: 4px;
  padding-left: 40px;
  background: #125f86;
}
.progress-fill {
  width: 203px;
  height: 4px;
  background: #0095d5;
}
.cursor {
  position: absolute;
  left: 769px;
  top: 545px;
}
```
